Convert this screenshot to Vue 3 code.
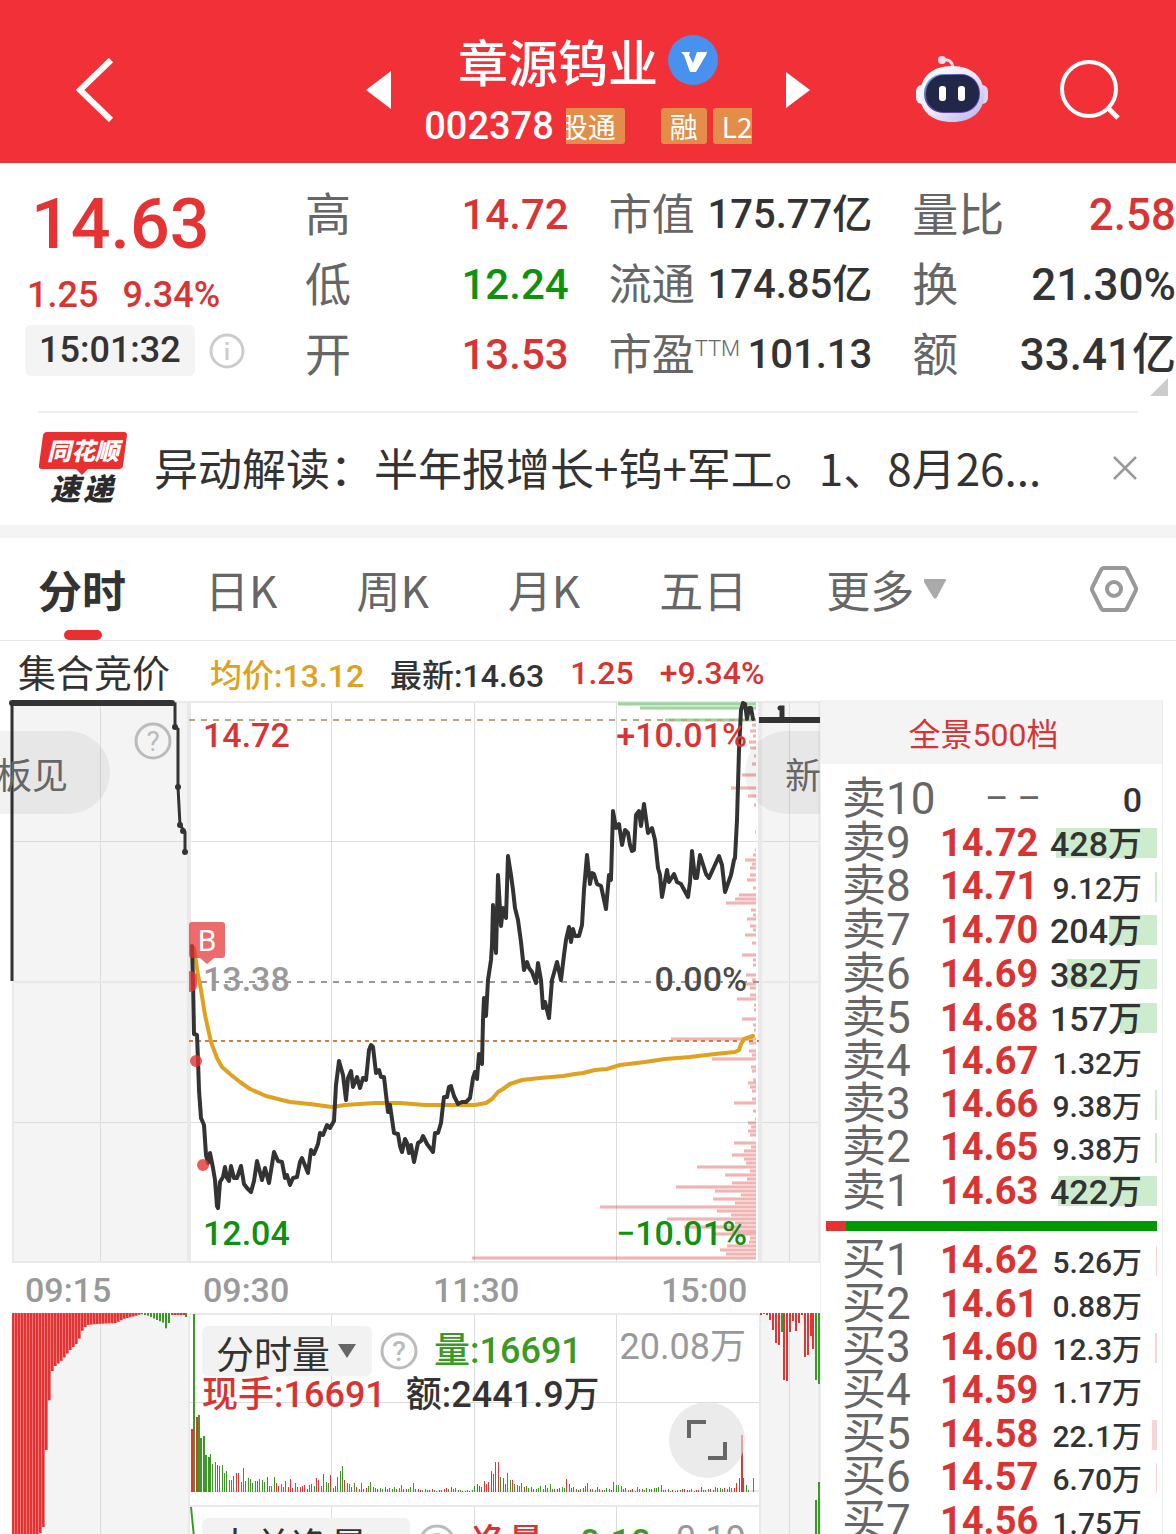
<script setup>
const columns = [
  {
    size: 'wide',
    rows: [
      { label: '高', value: '14.72', tone: 'up' },
      { label: '低', value: '12.24', tone: 'down' },
      { label: '开', value: '13.53', tone: 'up' },
    ],
  },
  {
    size: 'compact',
    rows: [
      { label: '市值', value: '175.77亿' },
      { label: '流通', value: '174.85亿' },
      { label: '市盈', sup: 'TTM', value: '101.13' },
    ],
  },
  {
    size: 'last-col',
    rows: [
      { label: '量比', value: '2.58', tone: 'up' },
      { label: '换', value: '21.30%' },
      { label: '额', value: '33.41亿' },
    ],
  },
]

const tabs = ['分时', '日K', '周K', '月K', '五日']

const sells = [
  { label: '卖10', price: '– –', qty: '0', bar: 0, flat: true },
  { label: '卖9', price: '14.72', qty: '428万', bar: 101 },
  { label: '卖8', price: '14.71', qty: '9.12万', bar: 2 },
  { label: '卖7', price: '14.70', qty: '204万', bar: 48 },
  { label: '卖6', price: '14.69', qty: '382万', bar: 90 },
  { label: '卖5', price: '14.68', qty: '157万', bar: 37 },
  { label: '卖4', price: '14.67', qty: '1.32万', bar: 0 },
  { label: '卖3', price: '14.66', qty: '9.38万', bar: 2 },
  { label: '卖2', price: '14.65', qty: '9.38万', bar: 2 },
  { label: '卖1', price: '14.63', qty: '422万', bar: 99 },
]
const buys = [
  { label: '买1', price: '14.62', qty: '5.26万', bar: 1 },
  { label: '买2', price: '14.61', qty: '0.88万', bar: 0 },
  { label: '买3', price: '14.60', qty: '12.3万', bar: 2 },
  { label: '买4', price: '14.59', qty: '1.17万', bar: 0 },
  { label: '买5', price: '14.58', qty: '22.1万', bar: 5 },
  { label: '买6', price: '14.57', qty: '6.70万', bar: 1 },
  { label: '买7', price: '14.56', qty: '1.75万', bar: 0 },
]

const priceLine =
  '192,946 193,980 194,1034 197,1035 198,1060 199,1090 201,1118 204,1125 206,1155 208,1163 210,1153 213,1168 215,1180 217,1206 218,1208 220,1182 223,1177 225,1167 227,1178 229,1181 231,1166 234,1178 237,1178 241,1166 244,1184 247,1188 251,1192 254,1181 257,1161 262,1180 265,1168 269,1183 274,1152 278,1161 282,1162 285,1178 287,1175 290,1185 293,1178 297,1177 300,1162 302,1158 308,1173 311,1150 314,1154 318,1144 320,1133 323,1135 327,1125 330,1128 334,1121 336,1085 339,1061 343,1075 346,1100 348,1078 351,1071 353,1087 357,1077 360,1088 363,1078 366,1080 369,1050 371,1045 373,1047 376,1073 379,1070 381,1077 384,1077 388,1112 390,1105 394,1133 398,1134 400,1146 402,1152 405,1139 407,1143 409,1153 411,1145 414,1162 418,1143 421,1141 423,1136 427,1144 433,1152 435,1133 438,1133 441,1123 443,1105 444,1097 447,1097 449,1087 451,1086 454,1096 458,1104 462,1102 466,1102 470,1098 473,1078 475,1072 477,1079 479,1054 482,1064 483,1020 484,998 486,1016 488,980 491,960 492,945 493,905 496,953 498,875 501,926 503,908 506,918 508,856 511,875 513,890 515,908 518,920 521,942 524,970 527,962 529,968 532,972 536,983 538,963 541,980 543,1008 545,1002 549,1018 552,980 554,973 557,962 561,980 564,955 566,940 569,927 571,942 573,929 575,936 579,936 582,925 584,890 587,855 590,884 592,873 594,874 597,884 601,886 606,909 609,875 611,880 613,811 616,828 619,824 622,845 625,830 628,833 630,845 632,851 634,850 636,815 639,811 641,826 644,804 648,833 652,828 655,840 658,868 660,875 662,897 667,870 669,882 674,874 677,882 681,884 688,897 690,882 692,851 695,878 697,878 700,855 706,874 709,878 714,867 719,856 722,865 725,892 731,875 734,860 735,858 737,820 739,750 741,710 743,703 745,704 747,719 749,708 751,708 753,719'

const averageLine =
  '194,948 198,975 201,990 205,1015 211,1042 217,1058 222,1067 230,1074 240,1082 250,1089 266,1096 290,1102 310,1104 332,1107 345,1105 375,1103 400,1103 425,1105 475,1105 486,1103 492,1099 498,1092 503,1089 510,1084 522,1080 540,1078 563,1076 575,1074 583,1073 595,1070 607,1069 620,1065 645,1062 665,1059 690,1057 715,1054 735,1052 739,1050 741,1044 744,1039 753,1036'

// Chips distribution: [y, left edge], every bar ends at x = 756
const chips = [
  [725, 752], [731, 750], [736, 753], [742, 749], [748, 750], [756, 754], [764, 752], [775, 742], [788, 731], [796, 748], [805, 754],
  [832, 755], [850, 755], [855, 753], [860, 745], [864, 752], [868, 750], [875, 750], [880, 747], [888, 753], [895, 739], [899, 735],
  [903, 726], [910, 751], [915, 753], [919, 747], [926, 750], [930, 753], [935, 745], [943, 752], [955, 742], [960, 753], [965, 753],
  [975, 746], [980, 752], [984, 745], [988, 750], [995, 750], [999, 737], [1005, 754], [1010, 754], [1019, 742], [1025, 753], [1030, 754],
  [1039, 671], [1043, 749], [1051, 749], [1055, 752], [1059, 712], [1067, 751], [1071, 752], [1080, 753], [1083, 748], [1087, 750],
  [1091, 752], [1099, 752], [1103, 734], [1111, 753], [1119, 755], [1123, 748], [1127, 751], [1131, 748], [1135, 750], [1143, 734],
  [1147, 751], [1151, 744], [1155, 732], [1159, 744], [1163, 746], [1167, 697], [1171, 750], [1175, 725], [1179, 747], [1183, 732],
  [1187, 676], [1191, 715], [1195, 741], [1199, 713], [1203, 735], [1207, 600], [1211, 717], [1215, 731], [1219, 667], [1223, 735],
  [1227, 684], [1231, 732], [1234, 712], [1238, 750], [1242, 749], [1246, 727], [1250, 720], [1254, 726], [1258, 472],
]
const askChips = [[704, 618], [708, 640], [720, 665]]

const auctionDots = [[175, 727], [178, 787], [180, 825], [183, 831], [185, 852]]

// Minute volume bars
const heights = [
  63, 178, 75, 77, 54, 56, 37, 35, 38, 28, 30, 27, 26, 27, 19, 21, 12, 12, 16, 19, 19, 10, 24, 11, 14, 13, 9, 11, 11, 13,
  12, 10, 15, 6, 6, 15, 9, 6, 8, 5, 11, 5, 13, 4, 9, 5, 5, 6, 7, 3, 7, 8, 6, 14, 12, 6, 18, 10, 9, 17,
  4, 6, 15, 21, 26, 12, 9, 8, 5, 9, 5, 3, 9, 3, 4, 6, 10, 5, 4, 3, 4, 3, 5, 3, 4, 3, 5, 3, 4, 7,
  3, 3, 3, 5, 9, 3, 3, 2, 2, 3, 2, 2, 3, 2, 1, 2, 2, 3, 4, 3, 5, 3, 4, 2, 2, 1, 1, 2, 1, 2,
  6, 8, 6, 5, 11, 8, 10, 21, 18, 30, 30, 15, 14, 8, 19, 12, 12, 8, 7, 6, 9, 5, 6, 4, 5, 3, 3, 4, 6, 3,
  7, 4, 8, 3, 3, 3, 4, 5, 4, 13, 8, 4, 5, 3, 2, 3, 4, 6, 9, 3, 3, 2, 5, 3, 2, 2, 4, 3, 2, 10,
  7, 7, 6, 3, 4, 2, 2, 3, 1, 5, 3, 3, 2, 4, 3, 3, 4, 4, 5, 7, 2, 2, 3, 1, 2, 1, 2, 2, 3, 3,
  2, 2, 3, 1, 2, 2, 5, 2, 2, 3, 3, 2, 5, 4, 4, 3, 4, 3, 5, 4, 4, 9, 14, 57, 14, 7, 2, 0, 14,
]
const tones = 'rgrgggggrggrrrrgggrrggggrgrrggrgggr'
const minutes = heights.map((h, i) => {
  let tone = i === 0 || i === 2 || (i > 120 && i < 131) || (i > 229 && i < 235) ? 'r' : tones[(i * 7 + (i >> 3)) % tones.length]
  if (i === 1 || (i > 2 && i < 8) || i === heights.length - 1) tone = 'g'
  return { x: Math.round(191 + i * 2.36), h, tone, w: i < 8 || h > 50 ? 2 : 1 }
})

// Opening auction: bars hang from the top edge, heights interpolated between knots
const knots = [[12, 240], [38, 222], [42, 214], [44, 180], [46, 94], [49, 84], [51, 58], [54, 53], [61, 47], [68, 38], [71, 35], [77, 29], [80, 19], [84, 14], [87, 12], [95, 11], [115, 10], [122, 6], [134, 3], [140, 1], [148, 3], [156, 7], [163, 10], [166, 18], [170, 2], [187, 2]]
function hang(x) {
  const i = knots.findIndex((k, n) => n < knots.length - 1 && x < knots[n + 1][0])
  const [a, b] = [knots[i], knots[i + 1]]
  return a[1] + ((b[1] - a[1]) * (x - a[0])) / (b[0] - a[0])
}
const opening = Array.from({ length: 58 }, (_, i) => 12 + i * 3).map((x) => ({
  x,
  h: hang(x),
  tone: x > 138 && x < 169 ? 'g' : 'r',
}))
const closing = [
  [760, 2, 'r'], [763, 1, 'g'], [766, 2, 'r'], [769, 7, 'r'], [772, 17, 'r'], [775, 30, 'r'], [778, 32, 'r'], [781, 19, 'g'], [783, 67, 'r'], [786, 68, 'r'],
  [789, 19, 'r'], [792, 8, 'r'], [795, 18, 'r'], [798, 10, 'r'], [801, 2, 'r'], [804, 44, 'r'], [807, 42, 'r'], [810, 23, 'r'], [812, 36, 'r'], [815, 67, 'g'], [818, 71, 'g'],
]
</script>

<template>
  <div class="screen">
    <header class="top">
      <button class="plain" aria-label="返回">
        <svg width="38" height="64" viewBox="0 0 38 64"><path d="M35 2 4 32l31 30" fill="none" stroke="#fff" stroke-width="6" /></svg>
      </button>
      <div class="stock">
        <button class="plain" aria-label="上一只">
          <svg width="25" height="38" viewBox="0 0 25 38"><path d="M25 0v38L0 19z" fill="#fff" /></svg>
        </button>
        <div class="ident">
          <h1>
            章源钨业
            <svg width="50" height="50" viewBox="0 0 50 50">
              <circle cx="25" cy="25" r="25" fill="#4891ee" />
              <path d="M13 17h9l-1 3 4 8 4-11h10l-1 3-10 17h-6L16 20z" fill="#fff" />
            </svg>
          </h1>
          <div class="code">
            <span>002378</span>
            <div class="tags"><i class="cut">股通</i><i class="rong">融</i><i>L2</i></div>
          </div>
        </div>
        <button class="plain" aria-label="下一只">
          <svg width="25" height="38" viewBox="0 0 25 38"><path d="M1 1v36l24-18z" fill="#fff" /></svg>
        </button>
      </div>
      <button class="plain robot" aria-label="智能助手">
        <svg width="72" height="68" viewBox="0 0 72 68">
          <defs>
            <linearGradient id="shell" x1="0" y1="0" x2="1" y2="1">
              <stop offset="0" stop-color="#fff" /><stop offset=".5" stop-color="#eceafa" /><stop offset="1" stop-color="#b4b2e8" />
            </linearGradient>
            <linearGradient id="visor" x1="0" y1="0" x2="1" y2="1">
              <stop offset="0" stop-color="#6fd0ee" /><stop offset=".4" stop-color="#5538a8" /><stop offset="1" stop-color="#7b48cf" />
            </linearGradient>
          </defs>
          <path d="M26 4q10-2 11 8" fill="none" stroke="#f0dcea" stroke-width="3" />
          <circle cx="26" cy="4" r="4" fill="#f3dcea" />
          <rect x="0" y="29" width="14" height="19" rx="6" fill="#f4f2fb" />
          <rect x="58" y="29" width="14" height="19" rx="6" fill="#d9d5f2" />
          <path d="M36 10c20 0 32 11 32 29 0 17-13 27-32 27S4 56 4 39c0-18 12-29 32-29z" fill="url(#shell)" />
          <rect x="8" y="18" width="56" height="39" rx="19" fill="url(#visor)" />
          <rect x="10" y="19" width="53" height="37" rx="18" fill="#202747" />
          <rect x="23" y="30" width="7" height="15" rx="3" fill="#fff" />
          <rect x="42" y="30" width="7" height="15" rx="3" fill="#fff" />
        </svg>
      </button>
      <button class="plain" aria-label="搜索">
        <svg width="60" height="60" viewBox="0 0 60 60"><g fill="none" stroke="#fff" stroke-width="4"><circle cx="29" cy="29" r="27" /><path d="m47 47 11 11" stroke-width="5" /></g></svg>
      </button>
    </header>

    <section class="quote">
      <div class="last">
        <strong>14.63</strong>
        <p><span>1.25</span><span>9.34%</span></p>
        <div class="clock">
          <time>15:01:32</time>
          <svg width="36" height="36" viewBox="0 0 36 36"><circle cx="18" cy="18" r="16" fill="none" stroke="#ccc" stroke-width="3" /><path d="M18 15v12M18 9v3" stroke="#ccc" stroke-width="3" /></svg>
        </div>
      </div>
      <dl v-for="(col, i) in columns" :key="i" :class="col.size">
        <div v-for="row in col.rows" :key="row.label">
          <dt>{{ row.label }}<sup v-if="row.sup">{{ row.sup }}</sup></dt>
          <dd :class="row.tone">{{ row.value }}</dd>
        </div>
      </dl>
      <svg class="corner" width="18" height="18" viewBox="0 0 18 18"><path d="M18 0v18H0z" fill="#ccc" /></svg>
    </section>

    <section class="news">
      <svg width="90" height="74" viewBox="0 0 90 74" class="brand">
        <path d="M9 0h77q3 0 3 3l-4 31q-1 3-4 3H50l-6 6-6-6H4q-4 0-3-4L5 3q1-3 4-3z" fill="#e93030" />
        <text x="45" y="28" font-size="24" fill="#fff" text-anchor="middle">同花顺</text>
        <text x="27" y="68" font-size="30" fill="#2b2b2b" text-anchor="middle">速</text>
        <text x="60" y="68" font-size="30" fill="#2b2b2b" text-anchor="middle">递</text>
      </svg>
      <a href="#news">异动解读：半年报增长+钨+军工。1、8月26...</a>
      <button class="plain" aria-label="关闭">
        <svg width="26" height="26" viewBox="0 0 26 26"><path d="m2 1 22 22M24 1 2 23" stroke="#999" stroke-width="2.500" /></svg>
      </button>
    </section>

    <nav class="tabs">
      <button v-for="(t, i) in tabs" :key="t" class="plain" :class="{ active: i === 0 }">{{ t }}</button>
      <button class="plain more">更多<svg width="22" height="20" viewBox="0 0 22 20"><path d="M1 0h20q2 0 0 3l-8 15q-2 3-4 0L0 3Q-1 0 1 0z" fill="#aaa" /></svg></button>
      <button class="plain gear" aria-label="设置">
        <svg width="48" height="46" viewBox="0 0 48 46"><g fill="none" stroke="#999" stroke-width="4"><path d="M14 2h20q2 0 3 2l8 16q2 3 0 6l-8 16q-1 2-3 2H14q-2 0-3-2L3 26q-2-3 0-6l8-16q1-2 3-2z" /><circle cx="24" cy="23" r="7" /></g></svg>
      </button>
    </nav>

    <p class="legend">
      <b>集合竞价</b><span class="avg">均价:13.12</span><span>最新:14.63</span><span class="up">1.25</span><span class="up">+9.34%</span>
    </p>

    <main class="board">
      <div class="charts">
        <div class="price">
          <svg viewBox="0 700 820 564">
            <rect x="12" y="702" width="176" height="560" fill="#f4f4f4" />
            <rect x="761" y="702" width="59" height="560" fill="#f4f4f4" />
            <g stroke="#dcdcdc" stroke-width="1">
              <path d="M12 841.5H820M12 1122.5H820M100.5 702V1262M331.5 702V1262M474.5 702V1262M616.5 702V1262M789.5 702V1262" />
            </g>
            <g stroke="#e9e9e9" stroke-width="2" fill="none">
              <path d="M12 702H820M12 1262H820M13 702V1262M12 982H189M761 982H820" />
              <path d="M189 702V1262M760 702V1262" stroke-width="4" />
              <path d="M819 702V1262" />
            </g>
            <g v-for="[y, x] in chips" :key="'c' + y">
              <rect :x="x" :y="y - 2" :width="756 - x" height="4" fill="#e53232" fill-opacity=".22" />
              <rect :x="x" :y="y - 1" :width="756 - x" height="2" fill="#d04848" fill-opacity=".22" />
            </g>
            <g v-for="[y, x] in askChips" :key="'a' + y">
              <rect :x="x" :y="y - 2" :width="756 - x" height="4" fill="#22aa22" fill-opacity=".26" />
              <rect :x="x" :y="y - 1" :width="756 - x" height="2" fill="#228822" fill-opacity=".22" />
            </g>
            <path d="M189 720H756" stroke="#b9a680" stroke-width="2" stroke-dasharray="6 6" />
            <path d="M201 982H759" stroke="#999" stroke-width="2" stroke-dasharray="6 6" />
            <path d="M189 1041H759" stroke="#cd7f45" stroke-width="2" stroke-dasharray="4 4" />
            <g font-size="34" class="marks">
              <text x="203" y="747" fill="#d93434">14.72</text>
              <text x="203" y="991" fill="#999">13.38</text>
              <text x="203" y="1245" fill="#108f10">12.04</text>
              <text x="747" y="991" fill="#4a4a4a" text-anchor="end">0.00%</text>
            </g>
            <polyline :points="averageLine" fill="none" stroke="#e0a020" stroke-width="4" stroke-linejoin="round" stroke-linecap="round" />
            <polyline :points="priceLine" fill="none" stroke="#333" stroke-width="4" stroke-linejoin="round" stroke-linecap="round" />
            <g font-size="34" class="marks" text-anchor="end">
              <text x="747" y="747" fill="#d93434">+10.01%</text>
              <text x="747" y="1245" fill="#108f10">−10.01%</text>
            </g>
            <path d="M12 981V703" stroke="#333" stroke-width="3" />
            <path d="M12 703H172" stroke="#333" stroke-width="6" stroke-linecap="round" />
            <path d="M170 704h5v23l3 2v58l2 38 5 7v20" fill="none" stroke="#333" stroke-width="3" />
            <circle v-for="[x, y] in auctionDots" :key="y" :cx="x" :cy="y" r="3" fill="#333" />
            <path d="M759 720H820" stroke="#333" stroke-width="6" />
            <path d="M780 708h2v10" fill="none" stroke="#333" stroke-width="5" stroke-linecap="round" />
            <g fill="#e53232" fill-opacity=".8">
              <path d="M189 971q8 0 8 6v8q0 7-8 7z" />
              <circle cx="196" cy="1061" r="6" /><circle cx="203" cy="1165" r="6" />
              <path d="M192 922h30q3 0 3 3v30q0 3-3 3h-8l-7 6-7-6h-8q-3 0-3-3v-30q0-3 3-3z" fill-opacity=".72" />
            </g>
            <text x="207" y="951" font-size="30" fill="#fff" text-anchor="middle">B</text>
            <g transform="translate(153 741)"><circle r="17" fill="none" stroke="#bbb" stroke-width="3" /><text y="10" font-size="28" fill="#bbb" text-anchor="middle">?</text></g>
          </svg>
          <button class="pill prev">板见</button>
          <button class="pill next">新</button>
        </div>

        <div class="times"><span>09:15</span><span>09:30</span><span>11:30</span><span>15:00</span></div>

        <div class="volume">
          <svg viewBox="0 1312 820 260">
            <rect x="12" y="1313" width="176" height="259" fill="#f4f4f4" />
            <rect x="761" y="1313" width="59" height="259" fill="#f4f4f4" />
            <g stroke="#dcdcdc" fill="none">
              <path d="M100.500 1313V1572M331.500 1313V1491M474.500 1313V1491M616.500 1313V1491M189 1402.500H760M789.500 1313V1572M331.500 1507V1572M474.500 1507V1572M616.500 1507V1572" />
            </g>
            <g stroke="#e9e9e9" stroke-width="2" fill="none">
              <path d="M189 1314H760M189 1491H760M189 1506H760M189 1313V1572M760 1313V1572M819 1313V1572" />
            </g>
            <rect x="12" y="1313" width="122" height="2" fill="#e53232" />
            <rect v-for="b in opening" :key="'o' + b.x" :x="b.x" y="1313" width="2" :height="b.h" :class="b.tone" />
            <rect v-for="b in opening.filter((o) => o.tone === 'r')" :key="'s' + b.x" :x="b.x + 2" y="1313" width="1" :height="b.h" fill="#ee7777" />
            <path d="M186 1313v4" stroke="#399a24" stroke-width="2" />
            <rect v-for="b in minutes" :key="'m' + b.x" :x="b.x" :y="1492 - b.h" :width="b.w" :height="b.h" :class="b.tone" />
            <rect v-for="[x, h, t] in closing" :key="'e' + x" :x="x" y="1313" width="2" :height="h" :class="t" />
            <path d="M819 1482V1572M816 1500V1572M191 1507l4 40" stroke="#399a24" stroke-width="2" />
          </svg>
          <div class="panel">
            <div class="line">
              <button class="chip">分时量<svg width="18" height="14" viewBox="0 0 18 14"><path d="M0 0h18L9 14z" fill="#666" /></svg></button>
              <svg class="help" width="38" height="38" viewBox="-19 -19 38 38"><circle r="17" fill="none" stroke="#bbb" stroke-width="3" /><text y="10" font-size="28" fill="#bbb" text-anchor="middle">?</text></svg>
              <span class="g">量:16691</span>
              <span class="scale">20.08万</span>
            </div>
            <div class="line second"><span class="up">现手:16691</span><span>额:2441.9万</span></div>
          </div>
          <button class="expand" aria-label="全屏">
            <svg width="42" height="40" viewBox="0 0 42 40"><path d="M3 18V2h17M39 22v16H22" fill="none" stroke="#666" stroke-width="4" /></svg>
          </button>
          <div class="panel lower">
            <div class="line">
              <button class="chip">大单净量<svg width="18" height="14" viewBox="0 0 18 14"><path d="M0 0h18L9 14z" fill="#666" /></svg></button>
              <svg class="help" width="38" height="38" viewBox="-19 -19 38 38"><circle r="17" fill="none" stroke="#bbb" stroke-width="3" /><text y="10" font-size="28" fill="#bbb" text-anchor="middle">?</text></svg>
              <span class="up">净量:</span><span class="g net">-0.10</span>
              <span class="scale">0.19</span>
            </div>
          </div>
        </div>
      </div>

      <aside class="book">
        <button class="depth">全景500档</button>
        <table class="sell">
          <tbody>
            <tr v-for="r in sells" :key="r.label">
              <th scope="row">{{ r.label }}</th>
              <td class="p" :class="{ flat: r.flat }">{{ r.price }}</td>
              <td class="q"><i :style="{ width: r.bar + 'px' }"></i><span :class="{ whole: !r.qty.includes('.') }">{{ r.qty }}</span></td>
            </tr>
          </tbody>
        </table>
        <div class="ratio"><i></i></div>
        <table class="buy">
          <tbody>
            <tr v-for="r in buys" :key="r.label">
              <th scope="row">{{ r.label }}</th>
              <td class="p">{{ r.price }}</td>
              <td class="q"><i :style="{ width: r.bar + 'px' }"></i><span>{{ r.qty }}</span></td>
            </tr>
          </tbody>
        </table>
      </aside>
    </main>
  </div>
</template>

<style>
body { margin: 0; background: #fff; }
</style>

<style scoped>
.screen {
  height: 100vh;
  display: flex;
  flex-direction: column;
  overflow: hidden;
  background: #fff;
  color: #333;
  font-family: Roboto, "Noto Sans CJK SC", sans-serif;
}
.screen * { box-sizing: border-box; }
svg { display: block; flex: none; }
i { font-style: normal; }
button { font-family: inherit; color: inherit; border: 0; margin: 0; cursor: pointer; }
.plain { background: none; padding: 0; font-size: inherit; line-height: inherit; }
h1, .tags, .news, .tabs, .legend b { font-family: "Noto Sans CJK SC", sans-serif; }
.up { color: #d93434; }
.down { color: #109010; }
.g { color: #399a24; fill: #399a24; }
.r { fill: #e53232; }

.top { display: flex; align-items: center; height: 163px; padding: 16px 56px 0 76px; background: #f23038; color: #fff; flex: none; }
.stock { display: flex; align-items: center; justify-content: space-between; width: 444px; margin-left: auto; }
.robot { margin: 0 72px 0 106px; }
.ident { display: flex; flex-direction: column; align-items: center; padding-top: 6px; }
h1 { display: flex; align-items: center; gap: 10px; margin: 0; font-size: 50px; line-height: 66px; font-weight: 500; }
.code { display: flex; align-items: center; gap: 12px; font-size: 38px; line-height: 66px; font-weight: 500; }
.tags { display: flex; width: 186px; overflow: hidden; font-size: 28px; line-height: 36px; font-weight: 400; }
.tags i { flex: none; height: 36px; padding: 0 9px; margin-right: 6px; border-radius: 3px; background: #e38d4b; }
.tags .cut { margin: 0 36px 0 -15px; }

.quote { position: relative; display: grid; grid-template-columns: 265px repeat(3, 1fr); column-gap: 40px; height: 248px; padding-top: 17px; flex: none; }
.last { padding-left: 25px; color: #e53232; }
.last strong { display: block; padding-left: 6px; font-size: 70px; line-height: 88px; font-weight: 500; }
.last p { display: flex; gap: 24px; margin: 0; padding-left: 2px; font-size: 36px; line-height: 54px; font-weight: 500; color: #d93434; }
.clock { display: flex; align-items: center; gap: 14px; margin-top: 3px; }
time { width: 170px; padding-left: 14px; border-radius: 6px; background: #f4f4f4; color: #333; font-size: 36px; line-height: 51px; font-weight: 500; }
dl { margin: 0; }
dl div { display: flex; justify-content: space-between; line-height: 70px; white-space: nowrap; }
dt { color: #666; font-size: 46px; }
dd { margin: 0; font-size: 42px; font-weight: 500; }
.last-col dd { font-size: 44px; }
.compact dt { font-size: 43px; }
.compact dd { font-size: 40px; }
sup { font-size: 22px; line-height: 22px; vertical-align: 14px; font-weight: 300; }
.corner { position: absolute; right: 8px; bottom: 15px; }

.news { display: flex; align-items: center; height: 114px; margin: 0 38px; border-top: 2px solid #eee; flex: none; }
.brand text { font-weight: 900; font-style: italic; }
.news a { flex: 1; margin-left: 26px; padding-bottom: 4px; color: #333; font-size: 44px; line-height: 60px; text-decoration: none; white-space: nowrap; }

.tabs { display: flex; align-items: center; gap: 79px; height: 116px; padding: 0 38px; border-top: 13px solid #f4f4f4; border-bottom: 1px solid #e6e6e6; flex: none; color: #666; font-size: 44px; line-height: 102px; white-space: nowrap; }
.tabs .active { position: relative; color: #333; font-weight: 700; }
.active::after { content: ""; position: absolute; left: 26px; bottom: 0; width: 38px; height: 10px; border-radius: 5px; background: #e93030; }
.more { display: flex; align-items: center; gap: 10px; }
.gear { margin-left: auto; }

.legend { display: flex; align-items: center; gap: 26px; height: 59px; margin: 0; padding: 4px 18px 0; font-size: 32px; font-weight: 500; white-space: nowrap; flex: none; }
.legend b { margin: -4px 14px 0 0; font-size: 38px; font-weight: 400; }
.avg { color: #e0a020; }

.board { display: grid; grid-template-columns: 1fr 343px; padding-right: 13px; flex: 1; min-height: 0; }
.charts { min-width: 0; }
.charts svg { overflow: hidden; }
.price, .volume { position: relative; overflow: hidden; }
.price > svg, .volume > svg { width: 100%; }
.marks { font-weight: 500; }
.pill { position: absolute; top: 31px; height: 83px; background: rgba(0, 0, 0, .05); color: #666; font-size: 36px; }
.prev { left: -60px; width: 170px; padding: 0 42px 0 0; border-radius: 42px; text-align: right; }
.next { right: -60px; width: 135px; padding: 0 0 0 40px; border-radius: 42px; text-align: left; }
.times { display: grid; grid-template-columns: 178px 230px 228px 1fr; height: 48px; padding-left: 25px; color: #999; font-size: 34px; line-height: 52px; font-weight: 500; }
.panel { position: absolute; left: 202px; top: 14px; width: 544px; font-size: 36px; line-height: 50px; font-weight: 500; }
.lower { top: 206px; }
.line { display: flex; align-items: center; white-space: nowrap; }
.chip { display: flex; align-items: center; gap: 8px; height: 50px; padding: 0 16px 0 14px; border-radius: 6px; background: #f2f2f2; font-size: 38px; }
.help { margin: 0 16px 0 8px; }
.scale { margin-left: auto; color: #999; font-weight: 400; line-height: 42px; align-self: flex-start; }
.net { margin-left: 14px; }
.second { gap: 20px; line-height: 38px; }
.expand { position: absolute; left: 669px; top: 90px; display: grid; place-items: center; width: 76px; height: 76px; padding: 0; border-radius: 50%; background: rgba(225, 225, 225, .65); }

.book { border: 1px solid #eee; border-width: 0 1px; height: 834px; }
.depth { display: block; width: 100%; height: 64px; padding: 0 16px 0 0; background: #f4f4f4; color: #d93434; font-size: 32px; }
table { width: 315px; margin-left: 21px; border-collapse: collapse; table-layout: fixed; }
th, td { padding: 0; height: 43px; line-height: 43px; white-space: nowrap; text-align: left; }
.sell { height: 434px; margin-top: 13px; }
.buy { height: 304px; margin-top: 8px; }
th { width: 98px; color: #666; font-size: 44px; font-weight: 400; }
.p { width: 100px; color: #d93434; font-size: 38px; font-weight: 700; }
.p.flat { padding-left: 45px; color: #666; font-size: 36px; font-weight: 400; }
.q { position: relative; padding: 4px 15px 0 0; line-height: 39px; text-align: right; font-size: 30px; font-weight: 500; }
.q i { position: absolute; right: 0; top: 7px; height: 30px; background: #cdebcd; }
.buy .q i { background: #f6d6d6; }
.q span { position: relative; }
.q .whole { font-size: 34px; }
.ratio { height: 10px; margin: 8px 5px 0 5px; background: #009a00; }
.ratio i { display: block; width: 6%; height: 10px; background: #e53232; }
</style>
